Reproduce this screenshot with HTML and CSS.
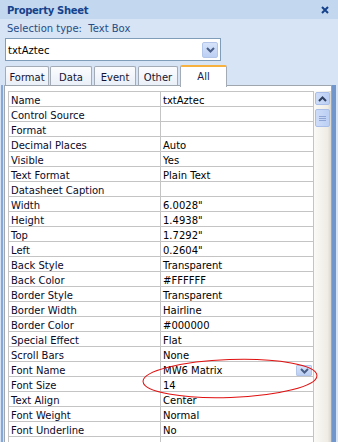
FILE: index.html
```html
<!DOCTYPE html>
<html>
<head>
<meta charset="utf-8">
<link rel="stylesheet" href="styles.css">
</head>
<body>
<div class="sheet">
  <div class="titlebar">
    <span class="title">Property Sheet</span>
    <svg class="close" width="8" height="8" viewBox="0 0 8 8"><path d="M1 1 L7 7 M7 1 L1 7" stroke="#15428b" stroke-width="2" fill="none"/></svg>
  </div>
  <div class="seltype">Selection type:&nbsp; Text Box</div>
  <div class="combo">
    <span class="combo-text">txtAztec</span>
    <div class="dd-btn">
      <svg width="9" height="6" viewBox="0 0 9 6"><path d="M1 1 L4.5 4.5 L8 1" stroke="#4a5f87" stroke-width="2" fill="none"/></svg>
    </div>
  </div>
  <div class="tabs">
    <div class="tab tab-format">Format</div>
    <div class="tab tab-data">Data</div>
    <div class="tab tab-event">Event</div>
    <div class="tab tab-other">Other</div>
    <div class="tab tab-all active">All</div>
  </div>
  <div class="pane-row">
    <div class="edge-left"></div>
    <div class="pane">
      <div class="grid">
        <div class="row"><div class="lbl">Name</div><div class="val">txtAztec</div></div>
        <div class="row"><div class="lbl">Control Source</div><div class="val"></div></div>
        <div class="row"><div class="lbl">Format</div><div class="val"></div></div>
        <div class="row"><div class="lbl">Decimal Places</div><div class="val">Auto</div></div>
        <div class="row"><div class="lbl">Visible</div><div class="val">Yes</div></div>
        <div class="row"><div class="lbl">Text Format</div><div class="val">Plain Text</div></div>
        <div class="row"><div class="lbl">Datasheet Caption</div><div class="val"></div></div>
        <div class="row"><div class="lbl">Width</div><div class="val">6.0028"</div></div>
        <div class="row"><div class="lbl">Height</div><div class="val">1.4938"</div></div>
        <div class="row"><div class="lbl">Top</div><div class="val">1.7292"</div></div>
        <div class="row"><div class="lbl">Left</div><div class="val">0.2604"</div></div>
        <div class="row"><div class="lbl">Back Style</div><div class="val">Transparent</div></div>
        <div class="row"><div class="lbl">Back Color</div><div class="val">#FFFFFF</div></div>
        <div class="row"><div class="lbl">Border Style</div><div class="val">Transparent</div></div>
        <div class="row"><div class="lbl">Border Width</div><div class="val">Hairline</div></div>
        <div class="row"><div class="lbl">Border Color</div><div class="val">#000000</div></div>
        <div class="row"><div class="lbl">Special Effect</div><div class="val">Flat</div></div>
        <div class="row"><div class="lbl">Scroll Bars</div><div class="val">None</div></div>
        <div class="row"><div class="lbl">Font Name</div><div class="val val-dd"><span>MW6 Matrix</span>
          <div class="cell-btn"><svg width="9" height="6" viewBox="0 0 9 6"><path d="M1 1 L4.5 4.5 L8 1" stroke="#4a5f87" stroke-width="2" fill="none"/></svg></div></div></div>
        <div class="row"><div class="lbl">Font Size</div><div class="val">14</div></div>
        <div class="row"><div class="lbl">Text Align</div><div class="val">Center</div></div>
        <div class="row"><div class="lbl">Font Weight</div><div class="val">Normal</div></div>
        <div class="row"><div class="lbl">Font Underline</div><div class="val">No</div></div>
        <div class="row"><div class="lbl"></div><div class="val"></div></div>
      </div>
      <div class="scroll">
        <div class="sb-btn">
          <svg width="9" height="6" viewBox="0 0 9 6"><path d="M1 5 L4.5 1.5 L8 5" stroke="#2f3f5f" stroke-width="2" fill="none"/></svg>
        </div>
        <div class="sb-thumb">
          <svg width="7" height="7" viewBox="0 0 7 7"><path d="M0 1.5 H7 M0 3.5 H7 M0 5.5 H7" stroke="#8fa6d4" stroke-width="1" fill="none"/></svg>
        </div>
      </div>
    </div>
    <div class="edge"></div>
  </div>
  <svg class="ellipse" width="180" height="44" viewBox="0 0 180 44">
    <ellipse cx="88" cy="20.5" rx="87" ry="19" fill="none" stroke="#e01010" stroke-width="1" transform="rotate(-2 88 20.5)"/>
  </svg>
</div>
</body>
</html>
```

FILE: styles.css
```css
html, body {
  margin: 0;
  padding: 0;
}
body {
  width: 338px;
  height: 442px;
  overflow: hidden;
  font-family: "DejaVu Sans", Verdana, sans-serif;
  font-size: 10px;
  color: #000;
}
.sheet {
  position: relative;
  width: 338px;
  height: 442px;
  background: #d6e4f5;
  display: flex;
  flex-direction: column;
  overflow: hidden;
}
.titlebar {
  height: 16px;
  padding-top: 3px;
  line-height: 16px;
  background: #c3d7ef;
  display: flex;
  align-items: center;
  justify-content: space-between;
  padding-left: 7px;
  padding-right: 9px;
}
.title {
  font-weight: bold;
  color: #15428b;
  letter-spacing: -0.3px;
  line-height: 16px;
  align-self: flex-start;
}
.close {
  display: block;
  margin-bottom: 3px;
}
.seltype {
  height: 20px;
  line-height: 19px;
  padding-left: 7px;
  color: #264d85;
}
.combo {
  margin-left: 5px;
  width: 214px;
  height: 21px;
  border: 1px solid #7f9db9;
  background: #fff;
  display: flex;
  align-items: center;
  justify-content: space-between;
}
.combo-text {
  padding-left: 2px;
  padding-top: 1px;
  line-height: 21px;
}
.dd-btn {
  width: 14px;
  height: 14px;
  margin-right: 2px;
  border: 1px solid #b3c6ea;
  border-radius: 2px;
  background: linear-gradient(#d6e3fa, #bccff3);
  display: flex;
  align-items: center;
  justify-content: center;
}
.dd-btn svg { display: block; }
.tabs {
  margin-top: 4px;
  height: 20px;
  display: flex;
  align-items: flex-end;
  padding-left: 5px;
}
.tab {
  height: 14px;
  padding-top: 4px;
  line-height: 14px;
  border: 1px solid #a3abb6;
  border-bottom: none;
  border-radius: 2px 2px 0 0;
  background: linear-gradient(#fbfcfe, #eaf0f8);
  text-align: center;
  color: #141432;
}
.tab-format { width: 42px; }
.tab-data { width: 40px; margin-left: 1px; }
.tab-event { width: 40px; margin-left: 2px; }
.tab-other { width: 38px; margin-left: 2px; }
.tab-all { width: 45px; margin-left: 2px; }
.tab.active {
  position: relative;
  z-index: 1;
  height: 18px;
  padding-top: 2px;
  line-height: 15px;
  border-top: 2px solid #f6b13e;
  background: #fff;
  margin-bottom: -2px;
  color: #1b1b50;
}
.pane-row {
  flex: 1;
  display: flex;
}
.edge-left {
  width: 2px;
  margin-left: 1px;
  margin-right: 1px;
  background: #86a8d8;
}
.pane {
  border: 1px solid #a0a6ae;
  border-bottom: none;
  background: #fff;
  display: flex;
  align-items: flex-start;
  padding-top: 5px;
  padding-left: 3px;
  box-sizing: border-box;
  width: 328px;
}
.edge {
  width: 4px;
  background: #7096cc;
}
.grid {
  width: 306px;
  box-sizing: border-box;
  border: 1px solid #c4c4c4;
  border-bottom: none;
  flex: none;
}
.row {
  display: grid;
  grid-template-columns: 152px 151px;
  border-bottom: 1px solid #c4c4c4;
}
.lbl, .val {
  height: 10px;
  padding-top: 4px;
  line-height: 10px;
  white-space: nowrap;
  overflow: visible;
}
.lbl {
  padding-left: 2px;
  border-right: 1px solid #c4c4c4;
  color: #0a0a28;
}
.val {
  padding-left: 2px;
}
.val-dd {
  display: flex;
  justify-content: space-between;
  align-items: flex-start;
}
.cell-btn {
  width: 14px;
  height: 9px;
  margin-top: -1px;
  border: 1px solid #b3c6ea;
  border-radius: 1px;
  background: linear-gradient(#d6e3fa, #bccff3);
  display: flex;
  align-items: center;
  justify-content: center;
}
.cell-btn svg { display: block; }
.scroll {
  width: 17px;
  height: 360px;
  box-sizing: border-box;
  padding: 1px 1px 0 1px;
  background: linear-gradient(90deg, #fbfaf7, #eeece4 80%, #d9d7cf);
  display: flex;
  flex-direction: column;
  align-items: center;
}
.sb-btn, .sb-thumb {
  width: 15px;
  box-sizing: border-box;
  border: 1px solid #a9bfe9;
  border-radius: 2px;
  background: linear-gradient(90deg, #cddcf8, #bcd0f5);
  display: flex;
  align-items: center;
  justify-content: center;
}
.sb-btn { height: 13px; }
.sb-thumb { height: 18px; margin-top: 4px; }
.sb-btn svg, .sb-thumb svg { display: block; }
.ellipse {
  position: absolute;
  left: 142px;
  top: 358px;
}
```
